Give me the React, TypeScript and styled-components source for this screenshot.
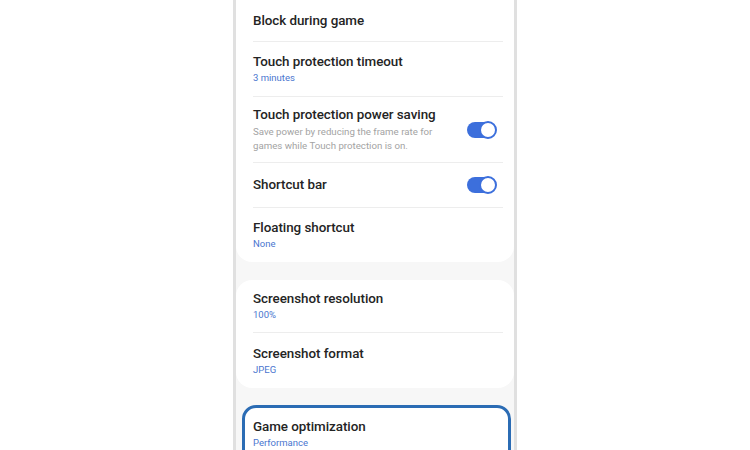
import React from "react";
import styled, { createGlobalStyle } from "styled-components";

const Global = createGlobalStyle`
  html, body { margin: 0; padding: 0; background: #ffffff; }
  body { font-family: Roboto, "Noto Sans", "Liberation Sans", sans-serif; }
  #root { width: 750px; height: 450px; overflow: hidden; }
`;

const Page = styled.div`
  width: 750px;
  height: 450px;
  display: flex;
  justify-content: flex-start;
  background: #ffffff;
`;

const Phone = styled.div`
  margin-left: 233px;
  width: 278px;
  height: 450px;
  border-left: 3px solid #e0e0e0;
  border-right: 3px solid #e0e0e0;
  background: #f7f7f7;
  display: flex;
  flex-direction: column;
  gap: 18px;
  overflow: hidden;
`;

const Card = styled.div<{ $highlight?: boolean; $top?: boolean }>`
  background: #ffffff;
  border-radius: ${(p) => (p.$top ? "0 0 16px 16px" : "16px")};
  display: flex;
  flex-direction: column;
  padding: 0 ${(p) => (p.$highlight ? "9px" : "11px")} 0 ${(p) => (p.$highlight ? "8px" : "17px")};
  ${(p) =>
    p.$highlight
      ? `margin: -1px 3px 0 6px; border: 3px solid #2b6cb4; border-radius: 14px;`
      : ""}
`;

const Row = styled.div<{ $h: number; $divider?: boolean }>`
  height: ${(p) => p.$h}px;
  display: flex;
  align-items: center;
  justify-content: space-between;
  box-sizing: border-box;
  border-bottom: ${(p) => (p.$divider ? "1px solid #ededed" : "none")};
`;

const Texts = styled.div`
  display: flex;
  flex-direction: column;
  gap: 2px;
`;

const Title = styled.div`
  font-size: 13.4px;
  font-weight: 500;
  color: #242424;
  line-height: 16px;
  letter-spacing: -0.05px;
`;

const Sub = styled.div`
  font-size: 9.5px;
  color: #4a76cf;
  line-height: 12px;
`;

const Desc = styled.div`
  font-size: 9.7px;
  color: #a3a3a3;
  line-height: 14px;
  width: 205px;
`;

const Track = styled.div`
  width: 29px;
  height: 16px;
  border-radius: 8px;
  background: #3c6fdc;
  position: relative;
  margin-right: 7px;
  flex: none;
`;

const Knob = styled.div`
  position: absolute;
  right: -1px;
  top: -1px;
  width: 14px;
  height: 14px;
  border-radius: 50%;
  background: #ffffff;
  border: 2px solid #3c6fdc;
`;

const Toggle = () => (
  <Track>
    <Knob />
  </Track>
);

export default function App() {
  return (
    <>
      <Global />
      <Page>
        <Phone>
          <Card $top>
            <Row $h={42} $divider>
              <Texts>
                <Title>Block during game</Title>
              </Texts>
            </Row>
            <Row $h={55} $divider>
              <Texts>
                <Title>Touch protection timeout</Title>
                <Sub>3 minutes</Sub>
              </Texts>
            </Row>
            <Row $h={66} $divider>
              <Texts>
                <Title>Touch protection power saving</Title>
                <Desc>Save power by reducing the frame rate for games while Touch protection is on.</Desc>
              </Texts>
              <Toggle />
            </Row>
            <Row $h={45} $divider>
              <Texts>
                <Title>Shortcut bar</Title>
              </Texts>
              <Toggle />
            </Row>
            <Row $h={54}>
              <Texts>
                <Title>Floating shortcut</Title>
                <Sub>None</Sub>
              </Texts>
            </Row>
          </Card>
          <Card>
            <Row $h={53} $divider>
              <Texts>
                <Title>Screenshot resolution</Title>
                <Sub>100%</Sub>
              </Texts>
            </Row>
            <Row $h={55}>
              <Texts>
                <Title>Screenshot format</Title>
                <Sub>JPEG</Sub>
              </Texts>
            </Row>
          </Card>
          <Card $highlight>
            <Row $h={52}>
              <Texts>
                <Title>Game optimization</Title>
                <Sub>Performance</Sub>
              </Texts>
            </Row>
          </Card>
        </Phone>
      </Page>
    </>
  );
}
